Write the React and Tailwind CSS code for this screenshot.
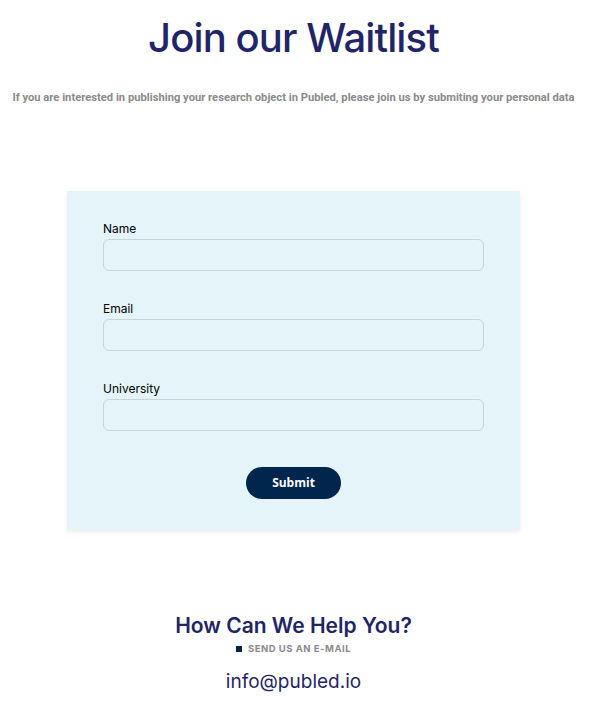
import React from 'react';

const Field = ({ label, id }) => (
  <div className="flex flex-col">
    <label htmlFor={id} className="text-[12px] leading-[16px] text-black mb-[2px]">{label}</label>
    <input
      id={id}
      type="text"
      className="h-[32px] w-full rounded-[6px] border border-[#c9d3dc] bg-[#e5f4f9] px-3 text-[12px] outline-none"
    />
  </div>
);

const App = () => {
  return (
    <div className="w-[587px] bg-white pb-[30px]" style={{ fontFamily: 'Inter, "Noto Sans", sans-serif' }}>
      <header className="flex flex-col items-center">
        <h1 className="mt-[15px] text-[40px] leading-[46px] font-medium tracking-[-0.9px] text-[#1f2566]">
          Join our Waitlist
        </h1>
        <p className="mt-[29px] text-[11.2px] font-bold text-[#8a8a8a]" style={{ fontFamily: 'Roboto, sans-serif' }}>
          If you are interested in publishing your research object in Publed, please join us by submiting your personal data
        </p>
      </header>

      <form className="mx-auto mt-[84px] w-[453px] bg-[#e5f4f9] px-[36px] pt-[30px] pb-[31px] shadow-[0_2px_4px_rgba(0,0,0,0.08)]">
        <div className="flex flex-col gap-[30px]">
          <Field label="Name" id="name" />
          <Field label="Email" id="email" />
          <Field label="University" id="university" />
        </div>
        <div className="mt-[36px] flex justify-center">
          <button
            type="submit"
            className="h-[32px] w-[95px] rounded-full bg-[#00264d] text-[12px] font-bold text-white"
            style={{ fontFamily: '"Open Sans", sans-serif' }}
          >
            Submit
          </button>
        </div>
      </form>

      <section className="mt-[83px] flex flex-col items-center">
        <h2 className="text-[21px] leading-[26px] font-semibold text-[#1f2566]">How Can We Help You?</h2>
        <div className="mt-[3px] flex items-center gap-[6px]">
          <span className="h-[6px] w-[6px] bg-[#00264d]" />
          <span className="text-[9.5px] font-bold tracking-[0.5px] text-[#8a8a8a]">SEND US AN E-MAIL</span>
        </div>
        <a href="#" className="mt-[14px] text-[19px] leading-[24px] text-[#1f2566]">info@publed.io</a>
      </section>
    </div>
  );
};

export default App;
